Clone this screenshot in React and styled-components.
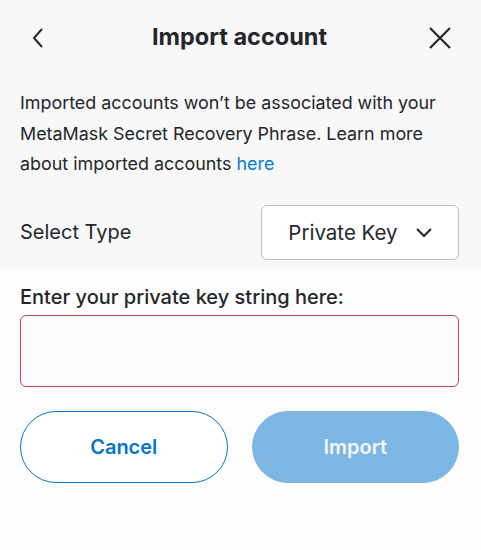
import React from 'react';
import styled, { createGlobalStyle } from 'styled-components';

const Global = createGlobalStyle`
  html, body { margin: 0; padding: 0; background: #fdfdfd; }
  body { font-family: "Inter", "Lato", sans-serif; color: #24272a; }
`;

const Page = styled.div`
  width: 481px;
  height: 550px;
  display: flex;
  flex-direction: column;
  background: #fdfdfd;
`;

const Top = styled.div`
  background: #f8f8f8;
  padding: 0 22px 9px 20px;
`;

const Header = styled.div`
  height: 75px;
  display: flex;
  align-items: center;
  justify-content: space-between;
`;

const IconButton = styled.button`
  width: 36px;
  height: 36px;
  border: none;
  background: transparent;
  padding: 0;
  display: flex;
  align-items: center;
  justify-content: ${p => (p.$side === 'left' ? 'flex-start' : 'flex-end')};
  color: #24272a;
  cursor: pointer;
`;

const Title = styled.h1`
  margin: 0 0 2px;
  font-size: 23.5px;
  font-weight: 700;
`;

const Description = styled.p`
  margin: 13px 0 0;
  font-size: 17.9px;
  line-height: 30.5px;
  color: #24272a;
`;

const Link = styled.a`
  color: #037dd6;
  text-decoration: none;
`;

const TypeRow = styled.div`
  margin-top: 25px;
  display: flex;
  align-items: center;
  justify-content: space-between;
`;

const Label = styled.span`
  font-size: 20px;
  font-weight: ${p => (p.$medium ? 500 : 400)};
`;

const Select = styled.div`
  width: 198px;
  height: 55px;
  box-sizing: border-box;
  border: 1px solid #bbc0c5;
  border-radius: 6px;
  background: #fff;
  display: flex;
  align-items: center;
  justify-content: center;
  gap: 18px;
  font-size: 20.5px;
`;

const Body = styled.div`
  padding: 16px 22px 0 20px;
  display: flex;
  flex-direction: column;
`;

const KeyInput = styled.div`
  margin-top: 6px;
  height: 72px;
  box-sizing: border-box;
  border: 1px solid #b54a58;
  border-radius: 6px;
  background: #fcfcfd;
`;

const Buttons = styled.div`
  margin-top: 24px;
  display: grid;
  grid-template-columns: 1fr 1fr;
  gap: 24px;
`;

const Button = styled.button`
  height: 72px;
  border-radius: 36px;
  font-family: inherit;
  font-size: 20px;
  font-weight: 600;
  border: 1px solid ${p => (p.$primary ? '#7db5e3' : '#0376c9')};
  background: ${p => (p.$primary ? '#7db5e3' : '#fff')};
  color: ${p => (p.$primary ? '#f4f8fc' : '#0376c9')};
`;

export default function App() {
  return (
    <Page>
      <Global />
      <Top>
        <Header>
          <IconButton $side="left" aria-label="Back">
            <svg width="14" height="20" viewBox="0 0 14 20" fill="none" stroke="#24272a" strokeWidth="2" style={{ marginLeft: 12 }}>
              <path d="M10 1 L2 10 L10 19" />
            </svg>
          </IconButton>
          <Title>Import account</Title>
          <IconButton $side="right" aria-label="Close">
            <svg width="22" height="22" viewBox="0 0 22 22" fill="none" stroke="#24272a" strokeWidth="2.2" style={{ marginRight: 8 }}>
              <path d="M1 1 L21 21 M21 1 L1 21" />
            </svg>
          </IconButton>
        </Header>
        <Description>
          Imported accounts won’t be associated with your MetaMask Secret Recovery Phrase. Learn more about imported accounts <Link href="#">here</Link>
        </Description>
        <TypeRow>
          <Label>Select Type</Label>
          <Select>
            <span>Private Key</span>
            <svg width="16" height="9" viewBox="0 0 16 9" fill="none" stroke="#24272a" strokeWidth="2">
              <path d="M1 1 L8 8 L15 1" />
            </svg>
          </Select>
        </TypeRow>
      </Top>
      <Body>
        <Label $medium>Enter your private key string here:</Label>
        <KeyInput />
        <Buttons>
          <Button>Cancel</Button>
          <Button $primary>Import</Button>
        </Buttons>
      </Body>
    </Page>
  );
}
